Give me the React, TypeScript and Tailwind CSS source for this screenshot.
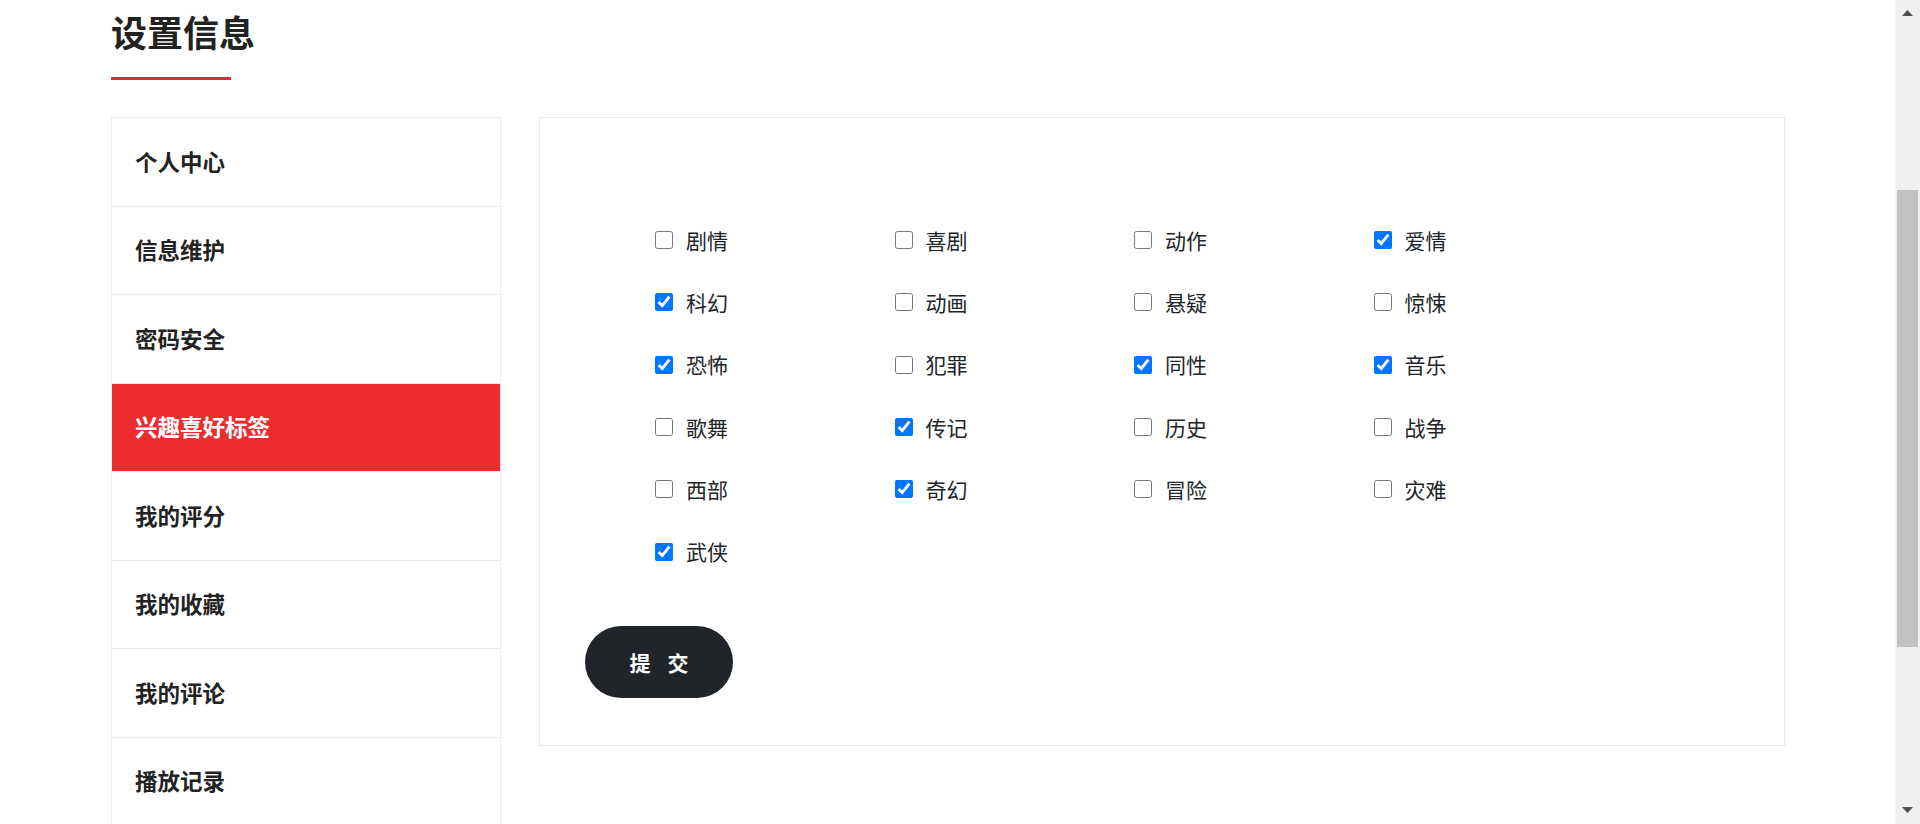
import React from "react";

const menu = ["个人中心", "信息维护", "密码安全", "兴趣喜好标签", "我的评分", "我的收藏", "我的评论", "播放记录"];

const tags: [string, boolean][] = [
  ["剧情", false], ["喜剧", false], ["动作", false], ["爱情", true],
  ["科幻", true], ["动画", false], ["悬疑", false], ["惊悚", false],
  ["恐怖", true], ["犯罪", false], ["同性", true], ["音乐", true],
  ["歌舞", false], ["传记", true], ["历史", false], ["战争", false],
  ["西部", false], ["奇幻", true], ["冒险", false], ["灾难", false],
  ["武侠", true],
];

export default function App() {
  return (
    <div className="flex h-[824px] w-[1920px] overflow-hidden bg-white font-['Noto_Sans_CJK_SC','Noto_Sans',sans-serif]">
      <div className="flex-1 pl-[111px]">
        <h1 className="mt-[11px] text-[36px] leading-[40px] font-bold text-[#222222]">设置信息</h1>
        <div className="mt-[26px] h-[3px] w-[120px] bg-[#e8292f]" />
        <div className="mt-[37px] flex items-start gap-[38px]">
          <div className="w-[390px] border border-b-0 border-[#ececec]">
            {menu.map((m, i) => (
              <div
                key={m}
                className={
                  i === 3
                    ? "flex h-[88.5px] items-center border-b border-[#ececec] bg-[#eb2d30] pl-[23px] text-[22.5px] font-bold text-white"
                    : "flex h-[88.5px] items-center border-b border-[#ececec] pl-[23px] text-[22.5px] font-bold text-[#222222]"
                }
              >
                {m}
              </div>
            ))}
          </div>
          <div className="w-[1246px] border border-[#e9e9e9] px-[45px] pt-[91px] pb-[47px]">
            <div className="ml-[70px] grid grid-cols-[repeat(4,239.5px)]">
              {tags.map(([t, c]) => (
                <label key={t} className="flex h-[62.3px] items-center">
                  <input type="checkbox" defaultChecked={c} className="m-0 h-[18px] w-[18px]" />
                  <span className="ml-[13px] text-[21px] leading-none text-[#212529]">{t}</span>
                </label>
              ))}
            </div>
            <button className="mt-[43.5px] flex h-[72px] w-[148px] items-center justify-center rounded-full bg-[#212529] text-[21px] font-bold tracking-[6px] text-white">
              <span className="ml-[6px]">提 交</span>
            </button>
          </div>
        </div>
      </div>
      <div className="flex w-[25px] flex-col items-center bg-[#f0f0f0] pt-[10px]">
        <svg width="11" height="6" viewBox="0 0 11 6"><path d="M5.5 0 L11 6 L0 6 Z" fill="#505050" /></svg>
        <div className="mt-[174px] h-[457px] w-[21px] bg-[#c1c1c1]" />
        <svg className="mt-[160px]" width="11" height="6" viewBox="0 0 11 6"><path d="M0 0 L11 0 L5.5 6 Z" fill="#505050" /></svg>
      </div>
    </div>
  );
}
